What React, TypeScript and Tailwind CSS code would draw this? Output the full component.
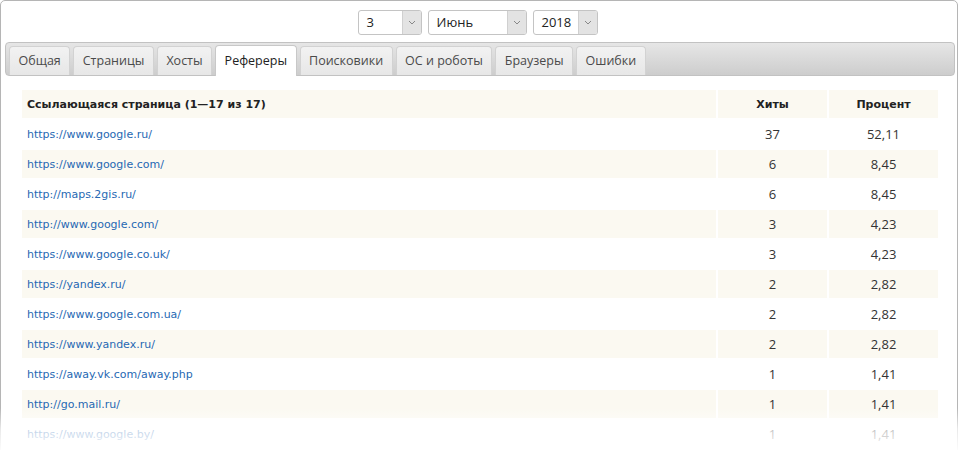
import React from "react";

const rows: [string, string, string][] = [
  ["https://www.google.ru/", "37", "52,11"],
  ["https://www.google.com/", "6", "8,45"],
  ["http://maps.2gis.ru/", "6", "8,45"],
  ["http://www.google.com/", "3", "4,23"],
  ["https://www.google.co.uk/", "3", "4,23"],
  ["https://yandex.ru/", "2", "2,82"],
  ["https://www.google.com.ua/", "2", "2,82"],
  ["https://www.yandex.ru/", "2", "2,82"],
  ["https://away.vk.com/away.php", "1", "1,41"],
  ["http://go.mail.ru/", "1", "1,41"],
  ["https://www.google.by/", "1", "1,41"],
];

const tabs = ["Общая", "Страницы", "Хосты", "Рефереры", "Поисковики", "ОС и роботы", "Браузеры", "Ошибки"];

function Select({ value, width }: { value: string; width: string }) {
  return (
    <div className={`flex h-[25px] ${width} rounded-[3px] border border-[#c4c4c4] bg-white overflow-hidden`}>
      <div className="flex-1 flex items-center pl-[8px] text-[13px] text-[#222]">{value}</div>
      <div className="w-[19px] flex items-center justify-center bg-[#e3e3e3] border-l border-[#d0d0d0]">
        <svg width="8" height="5" viewBox="0 0 8 5" fill="none">
          <path d="M1 1l3 3 3-3" stroke="#888" strokeWidth="1" />
        </svg>
      </div>
    </div>
  );
}

export default function App() {
  return (
    <div className="w-[960px] h-[450px] bg-white overflow-hidden relative" style={{ fontFamily: "'Open Sans', 'Noto Sans', sans-serif" }}>
      <div className="w-[958px] h-[470px] border border-[#b5b5b5] rounded-[5px] bg-white">
        <div className="flex justify-center gap-[6px] pt-[9px] pr-[3px]">
          <Select value="3" width="w-[64px]" />
          <Select value="Июнь" width="w-[99px]" />
          <Select value="2018" width="w-[65px]" />
        </div>
        <div className="mt-[7px] ml-[4px] mr-[2px] h-[34px] rounded-[4px] border border-[#c2c2c2] bg-gradient-to-b from-[#e6e6e6] to-[#cdcdcd] flex items-end gap-[3px] pl-[3px]">
          {tabs.map((t) => {
            const active = t === "Рефереры";
            return (
              <div
                key={t}
                className={
                  active
                    ? "h-[31px] px-[8.5px] flex items-center rounded-t-[4px] border border-b-0 border-[#c8c8c8] bg-white text-[12.5px] text-[#222] -mb-px"
                    : "h-[29px] px-[8.5px] flex items-center rounded-t-[4px] border border-b-0 border-[#d2d2d2] bg-gradient-to-b from-[#f2f2f2] to-[#e7e7e7] text-[12.5px] text-[#4a4a4a]"
                }
              >
                {t}
              </div>
            );
          })}
        </div>
        <div className="pl-[19px] pr-[17px] pt-[12px]">
          <table className="border-separate border-spacing-[2px] w-[920px]" style={{ fontFamily: "'DejaVu Sans', Verdana, sans-serif" }}>
            <thead>
              <tr className="h-[28px]">
                <th className="bg-[#fbf9f1] text-left font-bold text-[#222] pl-[5px] pt-[2px] text-[11px]">Ссылающаяся страница (1—17 из 17)</th>
                <th className="bg-[#fbf9f1] w-[109px] font-bold text-[#222] pt-[2px] text-[11px]">Хиты</th>
                <th className="bg-[#fbf9f1] w-[109px] font-bold text-[#222] pt-[2px] text-[11px]">Процент</th>
              </tr>
            </thead>
            <tbody>
              {rows.map((r, i) => {
                const bg = i % 2 === 1 ? "bg-[#fbf9f1]" : "bg-white";
                return (
                  <tr key={r[0]} className="h-[28px]">
                    <td className={`${bg} pl-[5px] pt-[2px] text-[#2668b3] text-[11px]`}>{r[0]}</td>
                    <td className={`${bg} text-center pt-[1px] text-[#333] text-[13px]`} style={{ fontFamily: "'Open Sans', sans-serif" }}>{r[1]}</td>
                    <td className={`${bg} text-center pt-[1px] text-[#333] text-[13px]`} style={{ fontFamily: "'Open Sans', sans-serif" }}>{r[2]}</td>
                  </tr>
                );
              })}
            </tbody>
          </table>
        </div>
      </div>
      <div className="absolute left-0 right-0 bottom-0 h-[42px] bg-gradient-to-b from-white/0 via-white/70 to-white/95" />
    </div>
  );
}
